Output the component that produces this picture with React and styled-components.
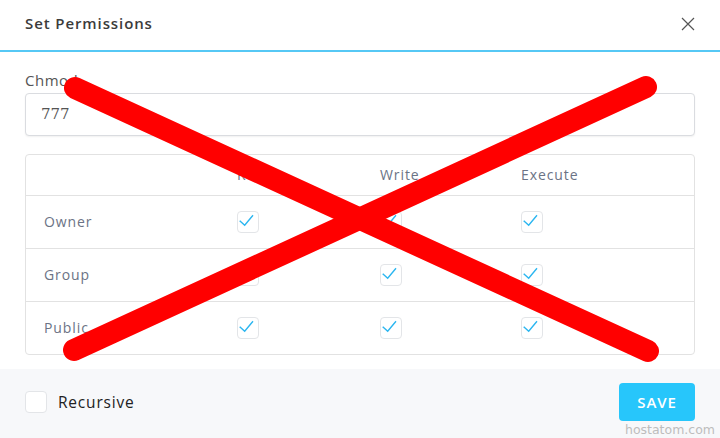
import React from "react";
import styled, { createGlobalStyle } from "styled-components";

const GlobalStyle = createGlobalStyle`
  body {
    margin: 0;
    background: #fff;
    font-family: "Open Sans", "Noto Sans", sans-serif;
  }
`;

const Dialog = styled.div`
  position: relative;
  width: 720px;
  height: 438px;
  background: #fff;
  display: flex;
  flex-direction: column;
  overflow: hidden;
`;

const Header = styled.div`
  height: 50px;
  padding: 0 25px 0 25px;
  display: flex;
  align-items: center;
  justify-content: space-between;
  border-bottom: 2px solid #56c8f5;
  box-sizing: content-box;

  h2 {
    margin: 0 0 4px;
    font-size: 15px;
    font-weight: 600;
    color: #3b3b3b;
    letter-spacing: 0.9px;
  }
`;

const CloseButton = styled.button`
  width: 14px;
  height: 14px;
  padding: 0;
  border: none;
  background: transparent;
  display: flex;
  margin-bottom: 2px;
  cursor: pointer;
`;

const Body = styled.div`
  padding: 18px 25px 14px;
`;

const Label = styled.label`
  display: block;
  font-size: 15px;
  line-height: 20px;
  color: #555;
  letter-spacing: 0.5px;
  margin-bottom: 3px;
`;

const Input = styled.input`
  display: block;
  width: 100%;
  height: 43px;
  box-sizing: border-box;
  border: 1px solid #dadce0;
  border-radius: 4px;
  box-shadow: 0 1px 2px rgba(0, 0, 0, 0.06);
  padding: 0 15px;
  font-family: "DejaVu Serif", serif;
  font-size: 15px;
  color: #555;
  outline: none;
`;

const Table = styled.div`
  margin-top: 18px;
  border: 1px solid #e2e2e2;
  border-radius: 4px;
`;

const Row = styled.div`
  display: grid;
  grid-template-columns: 193px 143px 141px 1fr;
  align-items: center;
  height: ${(p) => (p.$head ? "40px" : "52px")};
  border-bottom: ${(p) => (p.$last ? "none" : "1px solid #e2e2e2")};
  padding-left: 18px;
  font-size: 14px;
  color: #6b7385;
  letter-spacing: 0.9px;
`;

const Box = styled.span`
  width: 22px;
  height: 22px;
  box-sizing: border-box;
  border: 1px solid #e3e5e8;
  border-radius: 4px;
  background: #fff;
  display: flex;
  align-items: center;
  justify-content: center;
`;

const Footer = styled.div`
  margin-top: auto;
  height: 70px;
  background: #f7f8fa;
  padding: 0 25px;
  display: flex;
  align-items: center;
  justify-content: space-between;
`;

const Recursive = styled.label`
  display: flex;
  align-items: center;
  gap: 11px;
  font-size: 15.5px;
  color: #222;
  letter-spacing: 0.8px;
  margin-top: -2px;
`;

const SaveButton = styled.button`
  width: 76px;
  height: 38px;
  border: none;
  border-radius: 4px;
  background: #27c6fb;
  color: #fff;
  font-family: "Open Sans", sans-serif;
  font-size: 15px;
  font-weight: 600;
  letter-spacing: 0.9px;
  cursor: pointer;
  margin-top: -2px;
`;

const Watermark = styled.span`
  position: absolute;
  right: 5px;
  bottom: 1px;
  font-family: "DejaVu Sans", sans-serif;
  font-size: 12.5px;
  color: #bdbdbd;
`;

const CrossOut = styled.svg`
  position: absolute;
  left: 0;
  top: 0;
  pointer-events: none;
`;

const Check = ({ checked = true }) => (
  <Box>
    {checked && (
      <svg width="22" height="22" viewBox="0 0 22 22" style={{ marginLeft: -2, marginTop: -2 }}>
        <path d="M3.7 10.7 L8.7 15.3 L17 5.3" fill="none" stroke="#2bb6f0" strokeWidth="1.4" />
      </svg>
    )}
  </Box>
);

const rows = ["Owner", "Group", "Public"];

export default function App() {
  return (
    <Dialog>
      <GlobalStyle />
      <Header>
        <h2>Set Permissions</h2>
        <CloseButton aria-label="close">
          <svg width="14" height="14" viewBox="0 0 14 14">
            <path d="M1 1 L13 13 M13 1 L1 13" stroke="#555" strokeWidth="1.2" />
          </svg>
        </CloseButton>
      </Header>
      <Body>
        <Label>Chmod</Label>
        <Input defaultValue="777" />
        <Table>
          <Row $head>
            <span />
            <span>Read</span>
            <span>Write</span>
            <span>Execute</span>
          </Row>
          {rows.map((r, i) => (
            <Row key={r} $last={i === rows.length - 1}>
              <span>{r}</span>
              <Check />
              <Check />
              <Check />
            </Row>
          ))}
        </Table>
      </Body>
      <Footer>
        <Recursive>
          <Check checked={false} />
          Recursive
        </Recursive>
        <SaveButton>SAVE</SaveButton>
      </Footer>
      <Watermark>hostatom.com</Watermark>
      <CrossOut width="720" height="438" viewBox="0 0 720 438">
        <g stroke="#ff0000" strokeWidth="22" strokeLinecap="round">
          <line x1="75" y1="88" x2="648" y2="351" />
          <line x1="646" y1="87" x2="74" y2="350" />
        </g>
      </CrossOut>
    </Dialog>
  );
}
